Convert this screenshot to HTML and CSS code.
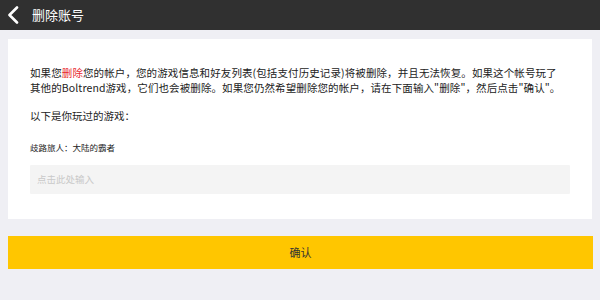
FILE: index.html
```html
<!DOCTYPE html>
<html lang="zh">
<head>
<meta charset="utf-8">
<link rel="stylesheet" href="styles.css">
</head>
<body>
<header class="topbar">
  <svg class="back" width="12" height="18" viewBox="0 0 12 18"><path d="M10 1.5 L2.5 9 L10 16.5" fill="none" stroke="#fff" stroke-width="2.6" stroke-linecap="round" stroke-linejoin="round"/></svg>
  <span class="title">删除账号</span>
</header>
<main class="page">
  <section class="card">
    <p class="desc">如果您<span class="red">删除</span>您的帐户，您的游戏信息和好友列表(包括支付历史记录)将被删除，并且无法恢复。如果这个帐号玩了<br>其他的Boltrend游戏，它们也会被删除。如果您仍然希望删除您的帐户，请在下面输入"删除"，然后点击"确认"。</p>
    <p class="label">以下是你玩过的游戏：</p>
    <p class="game">歧路旅人：大陆的霸者</p>
    <div class="input">点击此处输入</div>
  </section>
  <div class="btn">确认</div>
</main>
</body>
</html>
```
FILE: styles.css
```css
html, body { margin: 0; padding: 0; }
body {
  width: 600px; height: 300px; overflow: hidden;
  background: #efeff4;
  font-family: "Noto Sans CJK SC", "Noto Sans", sans-serif;
  color: #222;
}
.topbar {
  height: 30px; background: #303030;
  display: flex; align-items: center;
  padding-left: 7px; box-sizing: border-box;
}
.back { display: block; }
.title { color: #fff; font-size: 13px; margin-left: 13px; line-height: 30px; }
.page { padding: 9px 8px 0; }
.card {
  background: #fff; height: 180px; box-sizing: border-box;
  padding: 26px 22px 0 22px;
}
.desc { margin: 0; font-size: 10.5px; line-height: 15px; white-space: nowrap; letter-spacing: 0.1px; }
.red { color: #e8282f; }
.label { margin: 13px 0 0; font-size: 10.5px; line-height: 15px; }
.game { margin: 18px 0 0; font-size: 8.5px; line-height: 12px; }
.input {
  margin-top: 12px; width: 540px; height: 29px;
  background: #f4f4f4; color: #c9c9c9;
  font-size: 9.5px; line-height: 29px; padding-left: 7px; box-sizing: border-box;
  border-radius: 1px;
}
.btn {
  margin-top: 17px; height: 33px; background: #ffc600;
  text-align: center; font-size: 11px; line-height: 33px; color: #333;
  width: 585px;
}
```
